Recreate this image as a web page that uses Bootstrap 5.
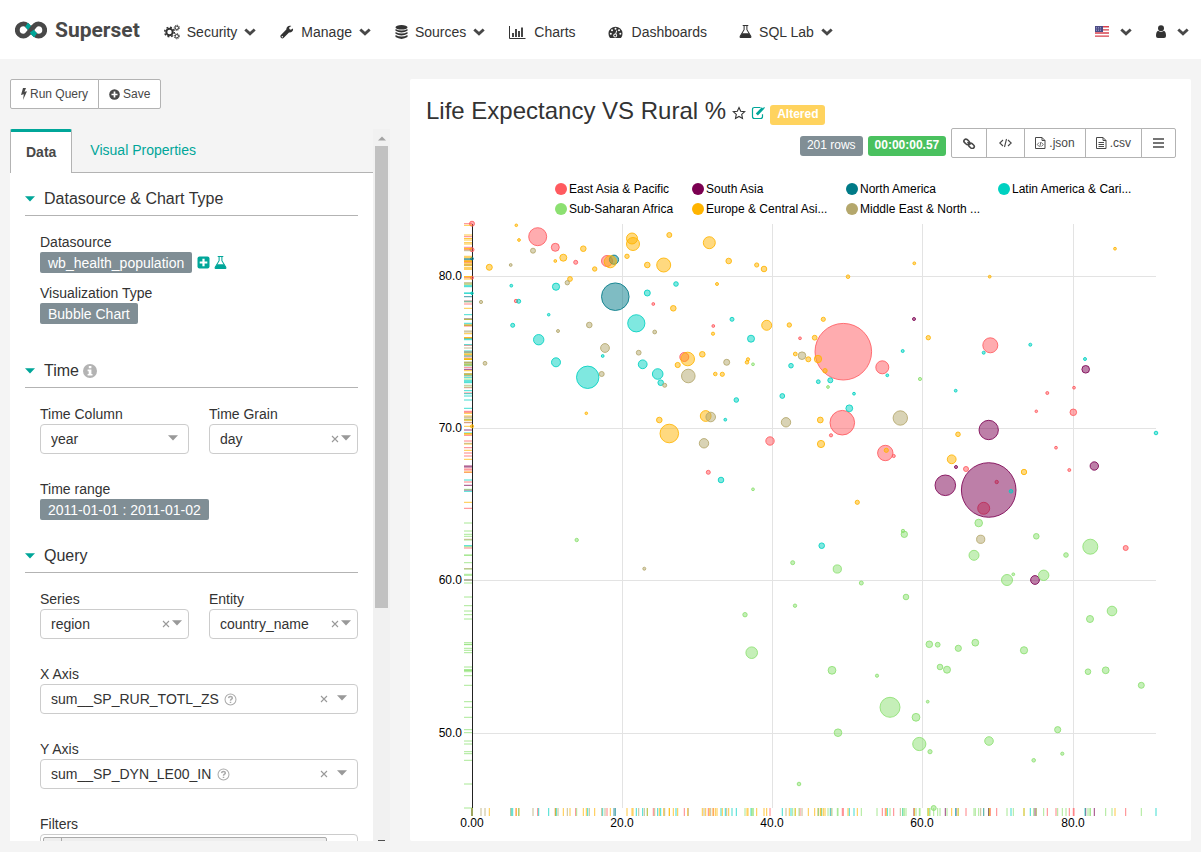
<!DOCTYPE html>
<html lang="en">
<head>
<meta charset="utf-8">
<meta name="viewport" content="width=device-width, initial-scale=1">
<title>Life Expectancy VS Rural % - Superset</title>
<link href="https://cdn.jsdelivr.net/npm/bootstrap@5.3.0/dist/css/bootstrap.min.css" rel="stylesheet">
<style>
:root { --teal: #00a699; --line: #b3b3b3; --slate: #808e95; --ink: #333; }
body { font-family: "Liberation Sans", Arial, sans-serif; font-size: 14px; line-height: 20px; color: var(--ink); background: #f4f4f4; }
svg { display: block; flex: none; }
.app-bar { height: 59px; padding: 4px 12px 0 15px; background: #fff; }
.brand { font: 700 21px/24px Roboto, sans-serif; color: #484848; gap: 8px; margin-right: 8px; padding: 0 0 4px; }
.app-bar .navbar-nav .nav-link { display: flex; align-items: center; gap: 7px; padding: 0 16px; color: var(--ink); }
.app-bar .navbar-nav .with-caret { padding-right: 8px; }
.app-bar .navbar-nav .right-link { gap: 11px; padding: 0 0 0 24px; }
.workspace { padding: 20px 10px 11px; gap: 20px; }
.side { flex: 0 0 380px; }
.btn-tool { --bs-btn-font-size: 12px; --bs-btn-line-height: 18px; --bs-btn-padding-y: 5px; --bs-btn-padding-x: 10px; --bs-btn-color: #484848; --bs-btn-bg: #fff; --bs-btn-border-color: var(--line); --bs-btn-border-radius: 2px; display: inline-flex; align-items: center; gap: 3px; }
.panel-scroll { background: #fff; }
.tab-strip { --bs-nav-tabs-border-width: 0; height: 44px; background: #f4f4f4; border-bottom: 1px solid var(--line); }
.tab-strip .nav-link { height: 43px; padding: 11px 18px; color: var(--teal); border: 0; border-radius: 0; line-height: 20px; }
.tab-strip .nav-link.active { height: 44px; padding: 10px 15px 0; color: #484848; font-weight: 700; background: #fff; border: solid var(--line); border-width: 3px 1px 0; border-top-color: var(--teal); border-radius: 2px 2px 0 0; }
.section-head { height: 43px; margin: 0 15px 16px; padding: 10px 0 0; font-size: 16px; line-height: 22px; font-weight: 400; border-bottom: 1px solid var(--line); gap: 9px; }
.section-body { padding: 0 15px 0 30px; }
.section-body label, .section-body .field-name { display: block; }
.pair { display: grid; grid-template-columns: 1fr 1fr; gap: 20px; }
.field { margin-bottom: 25px; }
.tag-row { margin-bottom: 10px; }
.source-section { padding-bottom: 11px; }
.source-section a { color: var(--teal); }
.tag { display: inline-block; padding: 0 8px; border: 0; border-radius: 2px; background: var(--slate); color: #fff; height: 21px; line-height: 20px; font-size: 14px; }
.chip { height: 20px; padding: 0 7px; border-radius: 3px; color: #fff; font: 700 12px/18px "Liberation Sans", Arial, sans-serif; }
.chip-altered { background: #ffd35e; }
.chip-rows { background: var(--slate); font-weight: 400; }
.chip-time { background: #4ac15f; }
.run-bar { gap: 5px; }
.pick { display: flex; align-items: center; height: 30px; padding: 0 6px 0 10px; border: 1px solid #ccc; border-radius: 4px; }
.pick.wide { padding-right: 10px; }
.pick select { appearance: none; border: 0; padding: 0; background: none; color: var(--ink); line-height: 20px; margin-right: 5px; }
.pick button { border: 0; padding: 0; background: none; margin-left: auto; }
.pick .arrow { margin-left: 2px; margin-bottom: 3px; }
.pick.wide .arrow { margin-left: 9px; }
.rail { width: 17px; background: #f1f1f1; padding: 7px 2px 0; }
.rail-thumb { height: 65.5%; background: #c1c1c1; margin-top: 5px; }
.rail-end { width: 7px; height: 1px; background: #505050; }
.filter-box { height: 60px; border: 1px solid #ccc; border-radius: 4px; padding: 2px 30px 0 2px; }
.filter-item { height: 20px; border: 1px solid #aaa; border-radius: 2px; background: #eee; }
.filter-item i { display: block; width: 18px; height: 20px; border-right: 1px solid #aaa; }
.chart-card { background: #fff; border-radius: 2px; padding: 15px 15px 0 16px; min-width: 0; }
.chart-title { font-size: 24px; line-height: 34px; font-weight: 400; margin: 0 6px 0 0; }
.plot { width: 100%; height: 658px; margin-top: 17px; }
.plot text { font-size: 12px; fill: #000; }
</style>
</head>
<body class="vh-100 d-flex flex-column overflow-hidden">

<svg width="0" height="0" class="position-absolute" aria-hidden="true">
  <symbol id="chevron" viewBox="0 0 12 8"><path d="M1.300 1.500 6 5.800l4.700-4.300" fill="none" stroke="#484848" stroke-width="2.900"/></symbol>
  <symbol id="tri" viewBox="0 0 10 6"><path d="M0 .3h10L5 5.500z"/></symbol>
  <symbol id="cross" viewBox="0 0 8 8"><path d="M1 1l6 6M7 1 1 7" stroke="#999" stroke-width="1.100"/></symbol>
  <symbol id="flask" viewBox="0 0 14 14"><path d="M4 .5h6M5.500.5V5L1.300 12.200q-.5 1.300.8 1.300h9.800q1.300 0 .8-1.300L8.500 5V.5" fill="none" stroke="currentColor" stroke-width="1.100"/><path d="M3.300 9h7.400l2.400 3.800-.6.7H1.500l-.6-.7z" fill="currentColor"/></symbol>
  <symbol id="help" viewBox="0 0 14 14"><circle cx="7" cy="7" r="5.900" fill="none" stroke="#aaa" stroke-width="1.100"/><path d="M4.900 5.500Q5.100 3.700 7 3.700t2 1.600C9 6.700 7 6.600 7 8.300M7 9.300v1.600" fill="none" stroke="#aaa" stroke-width="1.600"/></symbol>
</svg>

<header class="app-bar navbar navbar-expand flex-nowrap flex-shrink-0 justify-content-start">
  <a class="brand navbar-brand d-flex align-items-center" href="#">
    <svg width="32" height="18" viewBox="0 0 32 18" fill="none" stroke-width="4.800"><path d="M16 9C13 5 11.500 2.800 8.500 2.800a6.200 6.200 0 0 0 0 12.400C11.500 15.200 13 13 16 9S20.500 2.800 23.500 2.800a6.200 6.200 0 0 1 0 12.400C20.500 15.200 19 13 16 9z" stroke="#484848"/><path d="M11.500 3.700q1.800 1.300 4.500 5.300t4.500 5.300" stroke="#00a699"/><path d="M13.300 12.400Q14.500 11 16 9t2.700-3.400" stroke="#484848"/><path d="M16.800 10.100q2 3 3.700 4.200" stroke="#00a699"/></svg>
    Superset
  </a>
  <nav class="navbar-nav" aria-label="Main">
    <a class="nav-link with-caret" href="#"><svg width="16" height="16" viewBox="0 0 16 16" fill="none" stroke="#333"><circle cx="5.500" cy="8" r="3.200" stroke-width="2"/><circle cx="5.500" cy="8" r="4.800" stroke-width="1.500" stroke-dasharray="1.900 1.870"/><circle cx="12.800" cy="3.800" r="1.700"/><circle cx="12.800" cy="3.800" r="2.600" stroke-dasharray="1.100 .94"/><circle cx="12.800" cy="12.200" r="1.700"/><circle cx="12.800" cy="12.200" r="2.600" stroke-dasharray="1.100 .94"/></svg>Security<svg width="12" height="8"><use href="#chevron"/></svg></a>
    <a class="nav-link with-caret" href="#"><svg width="14" height="14" viewBox="0 0 14 14"><path d="M12.900 3.500 10.800 4.800 9.300 4V2.300L11.400 1C9 0 6.300 1.500 6.300 4.500L.7 10.200c-1.300 1.600 1.200 4.200 2.800 2.800L9 7.400c2.600.4 4.700-1.300 3.900-3.900z" fill="#333"/><circle cx="2.300" cy="11.700" r=".7" fill="#fff"/></svg>Manage<svg width="12" height="8"><use href="#chevron"/></svg></a>
    <a class="nav-link with-caret" href="#"><svg width="13" height="16" viewBox="0 0 13 16" fill="#333"><ellipse cx="6.500" cy="3.300" rx="6" ry="2.300"/><path d="M.5 5q6 3 12 0v1.800q-6 3.600-12 0zM.5 8.100q6 3 12 0v1.700q-6 3.600-12 0zM.5 11.100q6 3 12 0v2q-6 3.600-12 0z"/></svg>Sources<svg width="12" height="8"><use href="#chevron"/></svg></a>
    <a class="nav-link" href="#"><svg width="18" height="14" viewBox="0 0 18 14" fill="none" stroke="#333"><path d="M.5 1v12.500H16.500"/><path d="M4 12V8M7 12V4M10 12V6M13 12V2.500" stroke-width="1.800"/></svg>Charts</a>
    <a class="nav-link" href="#"><svg width="17" height="14" viewBox="0 0 17 14"><path d="M2 13A7 7 0 1 1 13 13z" fill="#333"/><g fill="#fff"><circle cx="2.800" cy="8.800" r="1"/><circle cx="4" cy="5.200" r="1"/><circle cx="7.500" cy="3.700" r="1"/><circle cx="11" cy="5.200" r="1"/><circle cx="12.300" cy="8.800" r="1"/><circle cx="7.200" cy="10.500" r="1.900"/></g><path d="M7.300 10.500 8.700 5.500" stroke="#fff"/><circle cx="7.200" cy="10.500" r="1" fill="#333"/></svg>Dashboards</a>
    <a class="nav-link with-caret" href="#"><svg width="13" height="13"><use href="#flask"/></svg>SQL Lab<svg width="12" height="8"><use href="#chevron"/></svg></a>
  </nav>
  <nav class="navbar-nav ms-auto" aria-label="Account">
    <a class="nav-link right-link" href="#" aria-label="Language"><svg width="14" height="12" viewBox="0 0 14 12"><path d="M0 0h14v11H0z" fill="#fff"/><path d="M0 .8h14M0 3.900h14M0 7h14M0 10.100h14" stroke="#d8414d" stroke-width="1.400"/><path d="M0 0h8v6H0z" fill="#4c4c86"/><path d="M1 1.500h6M1 3h6M1 4.500h6" stroke="#b6b6d6" stroke-width=".6" stroke-dasharray="1 1"/></svg><svg width="12" height="8"><use href="#chevron"/></svg></a>
    <a class="nav-link right-link" href="#" aria-label="User"><svg width="10" height="13" viewBox="0 0 10 13" fill="#333"><circle cx="5" cy="3.200" r="3"/><path d="M2 5.800Q5 8 8 5.800q2 1 2 5.200 0 2-2 2H2q-2 0-2-2 0-4.200 2-5.200z"/></svg><svg width="12" height="8"><use href="#chevron"/></svg></a>
  </nav>
</header>

<main class="workspace d-flex flex-grow-1 overflow-hidden">
  <aside class="side d-flex flex-column">
    <div class="btn-group align-self-start mb-3 pb-1">
      <button type="button" class="btn btn-tool"><svg width="6" height="12" viewBox="0 0 6 12"><path d="M2 0h3L3.500 3.800 6 3.200 2 12l.8-5.800L0 7z" fill="#484848"/></svg>Run Query</button>
      <button type="button" class="btn btn-tool"><svg width="11" height="11" viewBox="0 0 11 11"><circle cx="5.500" cy="5.500" r="5.300" fill="#484848"/><path d="M5.500 2.500v6M2.500 5.500h6" stroke="#fff" stroke-width="1.700"/></svg>Save</button>
    </div>
    <div class="d-flex flex-grow-1 overflow-hidden">
      <div class="panel-scroll flex-grow-1 overflow-hidden">
        <nav class="nav nav-tabs tab-strip">
          <a class="nav-link active" href="#">Data</a>
          <a class="nav-link" href="#">Visual Properties</a>
        </nav>
        <section class="source-section">
          <h2 class="section-head d-flex align-items-center"><svg width="10" height="6" fill="#00a699"><use href="#tri"/></svg>Datasource &amp; Chart Type</h2>
          <div class="section-body">
            <span class="field-name">Datasource</span>
            <div class="tag-row d-flex align-items-center">
              <button type="button" class="tag">wb_health_population</button>
              <a href="#" class="ms-1" aria-label="Add"><svg width="14" height="13" viewBox="-1 0 14 13"><rect x=".5" y=".5" width="12" height="12" rx="2" fill="#00a699"/><path d="M6.500 2.700v7.600M2.700 6.500h7.600" stroke="#fff" stroke-width="2.200"/></svg></a>
              <a href="#" class="ms-1" aria-label="Explore in SQL Lab"><svg width="13" height="13"><use href="#flask"/></svg></a>
            </div>
            <span class="field-name">Visualization Type</span>
            <div class="tag-row d-flex"><button type="button" class="tag">Bubble Chart</button></div>
          </div>
        </section>
        <section>
          <h2 class="section-head d-flex align-items-center"><svg width="10" height="6" fill="#00a699"><use href="#tri"/></svg><span class="d-flex align-items-center gap-1">Time <svg width="14" height="14" viewBox="0 0 14 14"><circle cx="7" cy="7" r="7" fill="#b3b3b3"/><path d="M5.800 2h2.600v2.200H5.800zM4.600 5.500h3.800v4.400h1.100v1.700H4.600V9.900h1.100V7.200H4.600z" fill="#fff"/></svg></span></h2>
          <div class="section-body">
            <div class="pair">
              <div class="field"><label for="time-col">Time Column</label>
                <div class="pick wide"><select id="time-col"><option>year</option></select><svg class="arrow ms-auto" width="10" height="6" fill="#999"><use href="#tri"/></svg></div></div>
              <div class="field"><label for="grain">Time Grain</label>
                <div class="pick"><select id="grain"><option>day</option></select><button type="button" aria-label="Clear"><svg width="8" height="8"><use href="#cross"/></svg></button><svg class="arrow" width="10" height="6" fill="#999"><use href="#tri"/></svg></div></div>
            </div>
            <span class="field-name">Time range</span>
            <div class="tag-row d-flex"><button type="button" class="tag">2011-01-01 : 2011-01-02</button></div>
          </div>
        </section>
        <section>
          <h2 class="section-head d-flex align-items-center"><svg width="10" height="6" fill="#00a699"><use href="#tri"/></svg>Query</h2>
          <div class="section-body">
            <div class="pair">
              <div class="field"><label for="series">Series</label>
                <div class="pick"><select id="series"><option>region</option></select><button type="button" aria-label="Clear"><svg width="8" height="8"><use href="#cross"/></svg></button><svg class="arrow" width="10" height="6" fill="#999"><use href="#tri"/></svg></div></div>
              <div class="field"><label for="entity">Entity</label>
                <div class="pick"><select id="entity"><option>country_name</option></select><button type="button" aria-label="Clear"><svg width="8" height="8"><use href="#cross"/></svg></button><svg class="arrow" width="10" height="6" fill="#999"><use href="#tri"/></svg></div></div>
            </div>
            <div class="field"><label for="x-axis">X Axis</label>
              <div class="pick wide"><select id="x-axis"><option>sum__SP_RUR_TOTL_ZS</option></select><svg width="13" height="13"><use href="#help"/></svg><button type="button" aria-label="Clear"><svg width="8" height="8"><use href="#cross"/></svg></button><svg class="arrow" width="10" height="6" fill="#999"><use href="#tri"/></svg></div></div>
            <div class="field"><label for="y-axis">Y Axis</label>
              <div class="pick wide"><select id="y-axis"><option>sum__SP_DYN_LE00_IN</option></select><svg width="13" height="13"><use href="#help"/></svg><button type="button" aria-label="Clear"><svg width="8" height="8"><use href="#cross"/></svg></button><svg class="arrow" width="10" height="6" fill="#999"><use href="#tri"/></svg></div></div>
            <span class="field-name">Filters</span>
            <div class="filter-box"><div class="filter-item"><i></i></div></div>
          </div>
        </section>
      </div>
      <div class="rail d-flex flex-column" aria-hidden="true">
        <svg class="mx-auto" width="8" height="5" viewBox="0 0 8 5"><path d="M0 4.500h8L4 .5z" fill="#a3a3a3"/></svg>
        <div class="rail-thumb"></div>
        <div class="rail-end mt-auto mx-auto"></div>
      </div>
    </div>
  </aside>

  <section class="chart-card flex-grow-1 overflow-hidden">
    <div class="d-flex align-items-center">
      <h1 class="chart-title">Life Expectancy VS Rural %</h1>
      <a href="#" class="mt-1 me-1" aria-label="Favorite"><svg width="15" height="14" viewBox="0 0 15 14"><path d="m7 1.500 1.700 3.700 4 .5-3 2.700.8 4L7 10.400l-3.500 2 .8-4-3-2.700 4-.5z" fill="none" stroke="#333" stroke-width="1.100"/></svg></a>
      <a href="#" class="mt-1 me-1" aria-label="Edit"><svg width="15" height="14" viewBox="0 0 15 14" fill="none" stroke="#00a699"><path d="M9.500 1.500h-6q-2 0-2 2v7q0 2 2 2h6q2 0 2-2V8.300" stroke-width="1.200"/><path d="m5.800 8.500 6-6.200" stroke-width="2.800"/><path d="m12.400 1.800.9.800" stroke-width="2"/></svg></a>
      <span class="chip chip-altered mt-2">Altered</span>
    </div>
    <div class="run-bar d-flex justify-content-end align-items-start">
      <span class="chip chip-rows mt-2">201 rows</span>
      <span class="chip chip-time mt-2">00:00:00.57</span>
      <div class="btn-group">
        <button type="button" class="btn btn-tool" aria-label="Link"><svg width="14" height="12" viewBox="0 0 14 12" fill="none" stroke="#484848" stroke-width="1.600"><rect x="-1" y="-2" width="6" height="4" rx="2" transform="translate(3.200 3.500) rotate(42)"/><rect x="-1" y="-2" width="6" height="4" rx="2" transform="translate(8 7.500) rotate(42)"/><path d="m5.500 5 3 2.700"/></svg></button>
        <button type="button" class="btn btn-tool" aria-label="Embed code"><svg width="17" height="12" viewBox="0 0 17 12" fill="none" stroke="#484848" stroke-width="1.100"><path d="M6 3 2.800 6 6 9M11 3l3.200 3L11 9M9.500 2l-2 8"/></svg></button>
        <button type="button" class="btn btn-tool"><svg width="11" height="12" viewBox="0 0 11 12" fill="none" stroke="#484848"><path d="M.5.5h6.500l3 3v8H.5zM7 .5v3h3"/><path d="M4 5.500 2.300 7.500 4 9.500M6.500 5.500l1.700 2-1.700 2M5.800 5l-1 5" stroke-width=".8"/></svg>.json</button>
        <button type="button" class="btn btn-tool"><svg width="11" height="12" viewBox="0 0 11 12" fill="none" stroke="#484848"><path d="M.5.5h6.500l3 3v8H.5zM7 .5v3h3M2.500 5.500h5.500M2.500 7.500h5.500M2.500 9.500h5.500"/></svg>.csv</button>
        <button type="button" class="btn btn-tool" aria-label="Menu"><svg width="13" height="12" viewBox="0 0 13 12"><path d="M1 2h11M1 6h11M1 10h11" stroke="#484848" stroke-width="1.600"/></svg></button>
      </div>
    </div>
    <svg class="plot" id="plot" viewBox="426 175 750 658" role="img" aria-label="Bubble chart of life expectancy against rural population share"></svg>
  </section>
</main>

<script src="https://cdn.jsdelivr.net/npm/bootstrap@5.3.0/dist/js/bootstrap.bundle.min.js"></script>
<script>
// Each series: name, colour, legend column and row, then bubbles as "x,y,r" triples.
const series = [
  ["East Asia & Pacific", "#ff5a5f", 561, 0, "537.7,236.7,9 555.3,247.3,4 575.7,262.3,2 607,261,5.5 472,223.7,2.5 472,249.7,2 472,277.7,1.5 516,301,1.7 653.3,304,1.4 713.3,326,1.4 684.3,357,4.5 800,338.3,1.4 843.3,351.7,28.3 990.3,345.3,7.5 882.3,367.3,6.5 1074,387.7,1.4 770,441,4.2 708.3,472.3,2 842.3,422.7,12.3 831,435.3,1.6 885.3,453,7.7 893.7,456,1.6 966,469,2.5 996.7,482,1.7 983.7,508.3,6 1047.3,393,1.5 1036.3,411.3,1.3 1073.3,412.3,3.3 1056,447.7,1.4 1069.3,470,1.5 1125.7,548,2.5"],
  ["South Asia", "#7b0051", 698, 0, "914,319,1.5 1085.7,369.3,3.8 988.7,430,9.7 956,467,1.5 945.3,485.3,10.3 988.7,490,27.3 1094.3,466,4.2 1035,580,4.4"],
  ["North America", "#007a87", 852, 0, "614,259.7,4.6 615.3,296.7,13.8 472,258.7,1.4"],
  ["Latin America & Cari...", "#00d1c1", 1004, 0, "511.3,285.7,1.4 556,286.7,3.6 676,284,2.3 647.3,293,3 518.7,301.3,2 548.7,314.7,1.3 512.7,325.3,2 538.7,339.7,5.2 636.3,323.3,8.6 732,319.3,2 751,338.7,3.5 602.7,356,1.4 556,362.3,4.5 642.7,364.3,4.4 657.7,374,5.3 587.7,377.3,11.2 660.7,382.7,2.8 791,365.7,2.3 472,293.3,1.3 902.7,351,1.5 1030.3,344.7,1.5 983.7,352.7,1.5 887.3,375.3,1.4 1085,359,1.5 818.3,381.7,1.9 830.3,380.3,2.5 736.3,400,2.3 725.3,419.7,1.4 782.3,396,2.4 721,480,2.8 854,393.7,1.4 849.3,408.3,3.4 955.7,390.7,1.4 1156,433,1.8 1011,491.3,1.8 821.7,545.7,2.8"],
  ["Sub-Saharan Africa", "#8ce071", 561, 1, "753,364.3,1.4 920,379,1.6 828,387,1.4 753,489.3,1.4 576.7,540,1.7 792.7,562.7,2 745,614.7,2.2 795,605.7,1.7 903,531,1.7 904.3,534.3,3.2 978.7,523,3.8 1036.3,536.3,2.8 1066,555,2.3 1090.3,546.7,7.5 974,555.3,5 837.3,569,4.1 861.3,583,2 906,597,2.8 1007,580,5.5 1013.3,574.3,1.4 1043.7,575.3,5.2 1112,611,4.8 1090,619,3.5 751.7,652.7,5.8 799,784,1.8 832,670.3,3.9 877,675.7,1.6 929.3,644.3,3.3 937.7,644.7,2.4 958.3,648.3,3.1 975.3,642.7,3.4 1024,650.3,3.6 940,667,2.8 947,669.7,3.5 1088,671.7,2.8 1105.7,670.3,3.4 1141.3,685.3,3 890,707.3,10 916,717.3,3.9 927.7,701.7,1.4 838,732.7,3.8 919.3,744,6.6 930,751.7,2.1 989,741,4.3 1057.7,729.7,3.1 1033.7,760.3,1.8 1062.3,753.7,1.6 933.7,808,2.5"],
  ["Europe & Central Asi...", "#ffb400", 698, 1, "516.3,225.3,1.3 519,240,1.4 583.3,248.7,2.8 563.3,257.7,3.5 555.3,261,1.4 489.3,267.3,3 594.7,269,2.2 627,256.3,2.2 610.3,261.7,6.1 632,238.5,5.5 633,244,6.5 669.3,235,2.5 647.3,265,2.8 663.7,265,7 709.3,242.7,6 728.7,261,2.8 756.7,265,2.1 764,269,2.8 570,279,2.4 717,284,1.5 673.3,308.3,2.8 713,333.7,1.6 766.7,325.3,5 789.3,325,2.2 702.3,354.3,2.8 687.7,359,6.8 677.7,365,2.6 748,359.3,1.6 747,362.3,1.8 715.3,374,1.8 722.3,374.3,2.1 795.3,354,1.9 848,276.7,1.8 914.3,263.3,1.4 989.7,276.7,1.4 1115,248.7,1.4 823.3,319.3,2.1 814.7,337.7,2.4 808.3,359.3,2.5 818,359,3.7 825,370.7,2.2 928.3,337.7,2.2 586.3,413.3,1.3 659.3,420,2.8 705.7,416,5.4 669.3,433.5,9.3 472,426.3,1.6 820.3,420,2.9 821,444,3.6 886.3,450.3,2.1 958,434.3,2.3 951.7,459.3,4.4 1024,472,2.7 857.3,502.3,2.1"],
  ["Middle East & North ...", "#b4a76c", 852, 1, "533,250.7,2.5 510.7,265,1.4 567.3,282.7,2.2 481,302,1.6 589.3,325,2.8 558,331,1.5 654.7,332,1.9 605,348,4.4 638.7,352.7,2.4 485,363.3,1.9 726.7,362.3,3 601.7,374,2.5 688.3,376,6.8 664.7,385.3,2 802,355.7,3.8 710.7,417,4.8 704,443.3,4.7 786,422.3,4.7 644.3,568.7,1.5 900.3,418,7.2 980.7,539.3,4.1"]
];
const ns = "http://www.w3.org/2000/svg", plot = document.getElementById("plot");
const add = (tag, attrs, text) => {
  const el = document.createElementNS(ns, tag);
  for (const k in attrs) el.setAttribute(k, attrs[k]);
  if (text) el.textContent = text;
  plot.append(el);
};
const line = (x1, y1, x2, y2, stroke, o = 1) => add("line", { x1, y1, x2, y2, stroke, "stroke-opacity": o });

[[276.5, "80.0"], [428.5, "70.0"], [580.5, "60.0"], [733.5, "50.0"]].forEach(([y, t]) => {
  line(472, y, 1156, y, "#e3e3e3");
  add("text", { x: 462, y: Math.floor(y) + 4, "text-anchor": "end" }, t);
});
[[472.5, "0.00"], [622.5, "20.0"], [772.5, "40.0"], [922.5, "60.0"], [1073.5, "80.0"]].forEach(([x, t]) => {
  if (x > 473) line(x, 224, x, 808, "#e3e3e3");
  add("text", { x: Math.floor(x), y: 827, "text-anchor": "middle" }, t);
});
line(472.5, 224, 472.5, 808, "#222");

series.forEach(([name, color, x, row, pts]) => {
  add("circle", { cx: x, cy: 189 + row * 20, r: 6, fill: color });
  add("text", { x: x + 8, y: 193 + row * 20 }, name);
  pts.split(" ").map(p => p.split(",").map(Number)).forEach(([cx, cy, r]) => {
    add("circle", { cx, cy, r, fill: color, "fill-opacity": .5, stroke: color, "stroke-opacity": .85 });
    line(464, cy, 472, cy, color, .75);
    line(cx, 808, cx, 816, color, .75);
  });
});
</script>
</body>
</html>
